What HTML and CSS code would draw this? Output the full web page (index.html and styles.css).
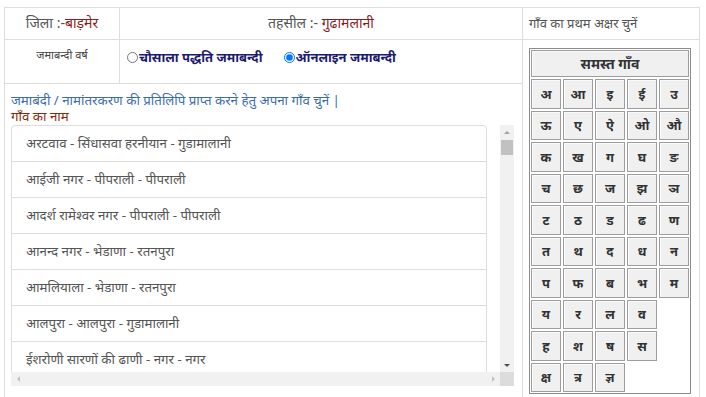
FILE: index.html
```html
<!DOCTYPE html>
<html lang="hi">
<head>
<meta charset="utf-8">
<title>जमाबंदी</title>
<link rel="stylesheet" href="styles.css">
</head>
<body>
<div class="page">
  <div class="board">
    <div class="cell c-district">जिला :-<span class="place">बाड़मेर</span></div>
    <div class="cell c-tehsil">तहसील :- <span class="place">गुढामलानी</span></div>
    <div class="cell c-pick">गाँव का प्रथम अक्षर चुनें</div>
    <div class="cell c-year">जमाबन्दी वर्ष</div>
    <div class="cell c-radios">
      <label class="opt"><input type="radio" name="jm">चौसाला पद्धति जमाबन्दी</label>
      <label class="opt"><input type="radio" name="jm" checked>ऑनलाइन जमाबन्दी</label>
    </div>
    <div class="cell c-letters">
      <div class="alpha">
        <div class="alpha-all"><button class="key key-all">समस्त गाँव</button></div>
        <div class="alpha-row"><button class="key">अ</button><button class="key">आ</button><button class="key">इ</button><button class="key">ई</button><button class="key">उ</button></div>
        <div class="alpha-row"><button class="key">ऊ</button><button class="key">ए</button><button class="key">ऐ</button><button class="key">ओ</button><button class="key">औ</button></div>
        <div class="alpha-row"><button class="key">क</button><button class="key">ख</button><button class="key">ग</button><button class="key">घ</button><button class="key">ङ</button></div>
        <div class="alpha-row"><button class="key">च</button><button class="key">छ</button><button class="key">ज</button><button class="key">झ</button><button class="key">ञ</button></div>
        <div class="alpha-row"><button class="key">ट</button><button class="key">ठ</button><button class="key">ड</button><button class="key">ढ</button><button class="key">ण</button></div>
        <div class="alpha-row"><button class="key">त</button><button class="key">थ</button><button class="key">द</button><button class="key">ध</button><button class="key">न</button></div>
        <div class="alpha-row"><button class="key">प</button><button class="key">फ</button><button class="key">ब</button><button class="key">भ</button><button class="key">म</button></div>
        <div class="alpha-row"><button class="key">य</button><button class="key">र</button><button class="key">ल</button><button class="key">व</button></div>
        <div class="alpha-row"><button class="key">ह</button><button class="key">श</button><button class="key">ष</button><button class="key">स</button></div>
        <div class="alpha-row"><button class="key">क्ष</button><button class="key">त्र</button><button class="key">ज्ञ</button></div>
      </div>
    </div>
    <div class="cell c-villages">
      <div class="intro">जमाबंदी / नामांतरकरण की प्रतिलिपि प्राप्त करने हेतु अपना गाँव चुनें |</div>
      <div class="vlabel">गाँव का नाम</div>
      <div class="scrollbox">
        <div class="viewport">
          <ul class="vlist">
            <li class="vitem">अरटवाव - सिंधासवा हरनीयान - गुडामालानी</li>
            <li class="vitem">आईजी नगर - पीपराली - पीपराली</li>
            <li class="vitem">आदर्श रामेश्वर नगर - पीपराली - पीपराली</li>
            <li class="vitem">आनन्द नगर - भेडाणा - रतनपुरा</li>
            <li class="vitem">आमलियाला - भेडाणा - रतनपुरा</li>
            <li class="vitem">आलपुरा - आलपुरा - गुडामालानी</li>
            <li class="vitem">ईशरोणी सारणों की ढाणी - नगर - नगर</li>
            <li class="vitem">उंडखा - उंडखा - गुडामालानी</li>
            <li class="vitem">उपरला - उपरला - नगर</li>
            <li class="vitem">ऊंडू - ऊंडू - रतनपुरा</li>
            <li class="vitem">एकलासर - एकलासर - नगर</li>
            <li class="vitem">ओगाला - ओगाला - रतनपुरा</li>
            <li class="vitem">कमठाई - कमठाई - पीपराली</li>
            <li class="vitem">करमावास - करमावास - गुडामालानी</li>
            <li class="vitem">करावडी - करावडी - नगर</li>
            <li class="vitem">कल्याणपुरा - कल्याणपुरा - पीपराली</li>
            <li class="vitem">कांठाडी - कांठाडी - रतनपुरा</li>
            <li class="vitem">कांठाडी चारणान - कांठाडी - रतनपुरा</li>
            <li class="vitem">कुड़ला - कुड़ला - गुडामालानी</li>
            <li class="vitem">केरली नाडी - भेडाणा - रतनपुरा</li>
            <li class="vitem">कोजा - कोजा - नगर</li>
            <li class="vitem">खड़ाली - खड़ाली - पीपराली</li>
            <li class="vitem">खारा - खारा - गुडामालानी</li>
            <li class="vitem">खेजडियाली - नगर - नगर</li>
            <li class="vitem">खेतलावास - खेतलावास - गुडामालानी</li>
            <li class="vitem">गंगाला - गंगाला - रतनपुरा</li>
            <li class="vitem">गंगासरा - गंगासरा - पीपराली</li>
            <li class="vitem">गांधव - गांधव - गुडामालानी</li>
            <li class="vitem">गुडामालानी - गुडामालानी - गुडामालानी</li>
            <li class="vitem">गोदारों की ढाणी - नगर - नगर</li>
            <li class="vitem">गोलिया - गोलिया - नगर</li>
            <li class="vitem">घोनिया - घोनिया - रतनपुरा</li>
            <li class="vitem">चवा - चवा - पीपराली</li>
            <li class="vitem">चाडों की ढाणी - भेडाणा - रतनपुरा</li>
            <li class="vitem">चैनपुरा - आलपुरा - गुडामालानी</li>
            <li class="vitem">चौखला - चौखला - गुडामालानी</li>
            <li class="vitem">जाणियों की ढाणी - पीपराली - पीपराली</li>
            <li class="vitem">जूना मीठा खेड़ा - जूना मीठा खेड़ा - नगर</li>
            <li class="vitem">जोगासर - जोगासर - नगर</li>
            <li class="vitem">जोगियों का तला - झाक - गुडामालानी</li>
            <li class="vitem">झाक - झाक - गुडामालानी</li>
            <li class="vitem">टापरा - टापरा - रतनपुरा</li>
            <li class="vitem">डंडाली - डंडाली - रतनपुरा</li>
            <li class="vitem">ढीढस - ढीढस - नगर</li>
            <li class="vitem">ढूंढ - ढूंढ - पीपराली</li>
            <li class="vitem">तारातरा - तारातरा - नगर</li>
            <li class="vitem">तालसर - तालसर - पीपराली</li>
            <li class="vitem">दाखां - दाखां - गुडामालानी</li>
            <li class="vitem">दूदवा - दूदवा - गुडामालानी</li>
            <li class="vitem">देदूसर - देदूसर - रतनपुरा</li>
            <li class="vitem">धनाऊ - धनाऊ - नगर</li>
            <li class="vitem">धीरा - धीरा - रतनपुरा</li>
            <li class="vitem">नगर - नगर - नगर</li>
            <li class="vitem">नया नगर - नगर - नगर</li>
            <li class="vitem">नेहरों की ढाणी - आलपुरा - गुडामालानी</li>
            <li class="vitem">नोसर - नोसर - पीपराली</li>
            <li class="vitem">पनोणियों का तला - भेडाणा - रतनपुरा</li>
            <li class="vitem">पांचला - पांचला - नगर</li>
            <li class="vitem">पीपराली - पीपराली - पीपराली</li>
            <li class="vitem">पूनियों का तला - पूनियों का तला - गुडामालानी</li>
            <li class="vitem">फागलिया - फागलिया - नगर</li>
            <li class="vitem">बांड - बांड - गुडामालानी</li>
            <li class="vitem">बामणोर - बामणोर - रतनपुरा</li>
            <li class="vitem">बालासर - बालासर - रतनपुरा</li>
            <li class="vitem">बिशारणियां - बिशारणियां - पीपराली</li>
            <li class="vitem">बुरहान का तला - बुरहान का तला - नगर</li>
            <li class="vitem">बेरीवाला तला - बेरीवाला तला - पीपराली</li>
            <li class="vitem">बोर चारणान - बोर चारणान - नगर</li>
            <li class="vitem">भलीसर - भलीसर - गुडामालानी</li>
            <li class="vitem">भाचभर - भाचभर - रतनपुरा</li>
            <li class="vitem">भीमथल - भीमथल - गुडामालानी</li>
            <li class="vitem">भेडाणा - भेडाणा - रतनपुरा</li>
            <li class="vitem">मंगले की बेरी - मंगले की बेरी - नगर</li>
            <li class="vitem">मगरा - मगरा - रतनपुरा</li>
            <li class="vitem">माडपुरा - माडपुरा - पीपराली</li>
            <li class="vitem">मालपुरा - मालपुरा - गुडामालानी</li>
            <li class="vitem">मीठडा - मीठडा - पीपराली</li>
            <li class="vitem">मोखावा - मोखावा - नगर</li>
            <li class="vitem">रतनपुरा - रतनपुरा - रतनपुरा</li>
            <li class="vitem">राणासर - राणासर - गुडामालानी</li>
            <li class="vitem">रामजी का गोल - रामजी का गोल - नगर</li>
            <li class="vitem">रावतसर - रावतसर - रतनपुरा</li>
            <li class="vitem">लालाणा - लालाणा - पीपराली</li>
            <li class="vitem">लूखु - लूखु - गुडामालानी</li>
            <li class="vitem">लोलावा - लोलावा - रतनपुरा</li>
            <li class="vitem">वरणा - वरणा - नगर</li>
            <li class="vitem">वीरावा - वीरावा - पीपराली</li>
            <li class="vitem">शोभाला जैतमाल - शोभाला जैतमाल - नगर</li>
            <li class="vitem">सणाऊ - सणाऊ - गुडामालानी</li>
            <li class="vitem">सरणू - सरणू - रतनपुरा</li>
            <li class="vitem">सांवलोर - सांवलोर - गुडामालानी</li>
            <li class="vitem">सिंधासवा चौहानान - सिंधासवा चौहानान - गुडामालानी</li>
            <li class="vitem">सिंधासवा हरनीयान - सिंधासवा हरनीयान - गुडामालानी</li>
            <li class="vitem">सूरते की बेरी - सूरते की बेरी - पीपराली</li>
            <li class="vitem">सेवाडा - सेवाडा - रतनपुरा</li>
            <li class="vitem">हरमालिया - हरमालिया - नगर</li>
            <li class="vitem">हाडेतर - हाडेतर - गुडामालानी</li>
            <li class="vitem">हाथितला - हाथितला - नगर</li>
            <li class="vitem">हुडों की ढाणी - पीपराली - पीपराली</li>
          </ul>
        </div>
        <div class="vbar" aria-hidden="true">
          <span class="sbtn"><span class="arrow arrow-up"></span></span>
          <span class="vtrack"><span class="vthumb"></span></span>
          <span class="sbtn"><span class="arrow arrow-down"></span></span>
        </div>
        <div class="hbar" aria-hidden="true">
          <span class="sbtn"><span class="arrow arrow-left"></span></span>
          <span class="htrack"></span>
          <span class="sbtn"><span class="arrow arrow-right"></span></span>
        </div>
        <div class="corner" aria-hidden="true"></div>
      </div>
    </div>
  </div>
</div>
</body>
</html>
```
FILE: styles.css
```css
html, body {
  margin: 0;
  background: #fff;
}
body {
  font-family: "Noto Sans", "Lato", sans-serif;
  color: #444;
}
.page {
  height: 397px;
  overflow: hidden;
  padding: 7px 6px 0 4px;
  box-sizing: border-box;
}
.board {
  display: grid;
  grid-template-columns: 115px 403px 177px;
  grid-template-rows: 32px 44px 340px;
  border-top: 1px solid #ddd;
  border-left: 1px solid #ddd;
}
.cell {
  border-right: 1px solid #ddd;
  border-bottom: 1px solid #ddd;
  box-sizing: border-box;
  min-width: 0;
}
.c-district,
.c-tehsil {
  text-align: center;
  line-height: 30px;
  font-size: 14px;
  color: #555;
}
.place {
  color: #8b1a1a;
}
.c-pick {
  line-height: 30px;
  padding-left: 6px;
  font-size: 13px;
  color: #555;
}
.c-year {
  font-size: 11px;
  color: #444;
  text-align: center;
  padding-top: 7px;
}
.c-radios {
  padding: 8px 2px 0;
  font-size: 13px;
  font-weight: bold;
  color: #1c1c6e;
  display: flex;
  align-items: flex-start;
  gap: 16px;
}
.opt {
  display: inline-flex;
  align-items: center;
}
.opt input {
  width: 11px;
  height: 11px;
  margin: 0 1px 0 5px;
}
.c-letters {
  grid-column: 3;
  grid-row: 2 / span 2;
  padding: 8px 0 0 6px;
}
.alpha {
  width: fit-content;
  border: 1px solid #8c8c8c;
  padding: 1px;
  display: flex;
  flex-direction: column;
  gap: 2px;
  background: #fff;
}
.alpha-row {
  display: grid;
  grid-template-columns: repeat(5, 30px);
  gap: 2px;
}
.key {
  height: 29.5px;
  box-sizing: border-box;
  border: 1px solid #9d9d9d;
  background: #f0f0f0;
  padding: 0;
  margin: 0;
  font-family: inherit;
  font-weight: bold;
  font-size: 13px;
  color: #333;
  box-shadow: inset 1px 1px 0 #fbfbfb;
}
.key-all {
  width: 158px;
  height: 27px;
  font-size: 14px;
}
.c-villages {
  grid-column: 1 / span 2;
  grid-row: 3;
  padding: 8px 8px 0 6px;
}
.intro {
  color: #3a6db0;
  font-size: 13.3px;
  line-height: 16px;
}
.vlabel {
  color: #8b2a0a;
  font-size: 13.3px;
  line-height: 16px;
}
.scrollbox {
  margin-top: 1px;
  width: 503px;
  height: 261px;
  display: grid;
  grid-template-columns: 1fr 14px;
  grid-template-rows: 1fr 14px;
}
.viewport {
  overflow: hidden;
  min-height: 0;
}
.vlist {
  list-style: none;
  margin: 0 13px 0 0;
  padding: 0;
}
.vitem {
  padding: 10px 14px;
  line-height: 15px;
  border: 1px solid #ddd;
  margin-bottom: -1px;
  font-size: 13.3px;
  color: #555;
  white-space: nowrap;
}
.vitem:first-child {
  border-radius: 4px 4px 0 0;
}
.vbar {
  background: #f1f1f1;
  display: flex;
  flex-direction: column;
}
.hbar {
  background: #f1f1f1;
  display: flex;
}
.corner {
  background: #dcdcdc;
}
.sbtn {
  flex: 0 0 14px;
  width: 14px;
  height: 14px;
  display: flex;
  align-items: center;
  justify-content: center;
}
.vtrack {
  flex: 1;
  padding: 1px 1px 0;
}
.vthumb {
  display: block;
  height: 15px;
  background: #c1c1c1;
}
.htrack {
  flex: 1;
}
.arrow {
  width: 0;
  height: 0;
}
.arrow-up {
  border-left: 3px solid transparent;
  border-right: 3px solid transparent;
  border-bottom: 3px solid #a3a3a3;
}
.arrow-down {
  border-left: 3px solid transparent;
  border-right: 3px solid transparent;
  border-top: 3px solid #505050;
}
.arrow-left {
  border-top: 3px solid transparent;
  border-bottom: 3px solid transparent;
  border-right: 3px solid #c3c3c3;
}
.arrow-right {
  border-top: 3px solid transparent;
  border-bottom: 3px solid transparent;
  border-left: 3px solid #c3c3c3;
}
```
